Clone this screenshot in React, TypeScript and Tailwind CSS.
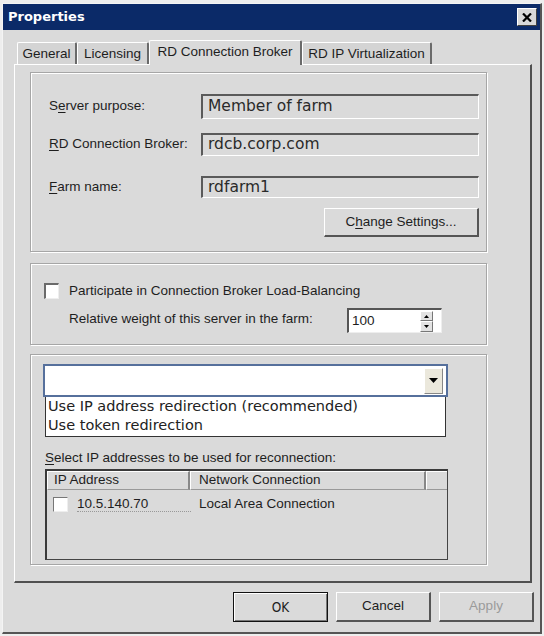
export default function App() {
  const tabs = [
    { label: 'General', w: 'w-[60px]', active: false },
    { label: 'Licensing', w: 'w-[72px]', active: false },
    { label: 'RD Connection Broker', w: 'w-[153px]', active: true },
    { label: 'RD IP Virtualization', w: 'w-[130px]', active: false },
  ];

  const fields = [
    { pre: 'S', key: 'e', post: 'rver purpose:', value: 'Member of farm', h: 'h-[25px]', mt: 'mt-0' },
    { pre: '', key: 'R', post: 'D Connection Broker:', value: 'rdcb.corp.com', h: 'h-[23px]', mt: 'mt-[14px]' },
    { pre: '', key: 'F', post: 'arm name:', value: 'rdfarm1', h: 'h-[22px]', mt: 'mt-[20px]' },
  ];

  return (
    <div className="w-[544px] h-[636px] bg-[#eeeeee] pl-[2px] pt-[3px] font-['Liberation_Sans',sans-serif] text-[13.5px] text-[#1e1e1e]">
      <div className="w-[540px] h-[631px] bg-[#dadada] border-l border-t border-[#f4f4f4] border-r-2 border-b-2 border-r-[#555] border-b-[#555] flex flex-col">
        {/* title bar */}
        <div className="h-[26px] bg-[#0b2a68] flex items-center justify-between pl-[5px] pr-[3px]">
          <span className="text-white font-bold text-[13px] font-['DejaVu_Sans',sans-serif]">Properties</span>
          <div className="w-[20px] h-[18px] bg-[#d8d8d8] border-t border-l border-white border-r border-b border-r-[#404040] border-b-[#404040] flex items-center justify-center">
            <svg width="10" height="9" viewBox="0 0 10 9">
              <path d="M1 0.5 L9 8.5 M9 0.5 L1 8.5" stroke="#000" strokeWidth="2.2" />
            </svg>
          </div>
        </div>

        {/* tabs */}
        <div className="mt-[10px] ml-[14px] h-[24px] flex items-end">
          {tabs.map((t) => (
            <div
              key={t.label}
              className={`${t.w} ${
                t.active
                  ? 'h-[25px] relative top-[1px] z-10 bg-[#dadada] pb-[2px]'
                  : 'h-[22px] bg-[#d4d4d4] pt-[1px]'
              } border-l border-t border-white border-r-2 border-r-[#6a6a6a] rounded-t-[2px] flex items-center justify-center whitespace-nowrap`}
            >
              {t.label}
            </div>
          ))}
        </div>

        {/* panel */}
        <div className="ml-[11px] w-[518px] h-[519px] border-l border-t border-white border-r-2 border-b-2 border-r-[#505050] border-b-[#505050] pl-[15px] pt-[7px]">
          {/* group 1 */}
          <div className="w-[457px] h-[180px] border border-[#a6a6a6] shadow-[inset_1px_1px_0_#fff,1px_1px_0_#fff] pt-[21px] pl-[18px] pr-[7px]">
            {fields.map((f) => (
              <div key={f.value} className={`flex items-center ${f.mt}`}>
                <span className="w-[152px]">
                  {f.pre}
                  <span className="underline underline-offset-2">{f.key}</span>
                  {f.post}
                </span>
                <div
                  className={`w-[278px] ${f.h} border-t-2 border-l-2 border-[#5a5a5a] border-r border-b border-r-white border-b-white flex items-center pl-[5px] font-['DejaVu_Sans',sans-serif] text-[15.5px] text-[#2a2a2a]`}
                >
                  {f.value}
                </div>
              </div>
            ))}
            <div className="flex justify-end mt-[10px]">
              <button className="w-[155px] h-[29px] bg-[#dadada] border-l border-t border-white border-r-2 border-b-2 border-r-[#555] border-b-[#555] flex items-center justify-center">
                C<span className="underline underline-offset-2">h</span>ange Settings...
              </button>
            </div>
          </div>

          {/* group 2 */}
          <div className="mt-[11px] w-[457px] h-[82px] border border-[#a6a6a6] shadow-[inset_1px_1px_0_#fff,1px_1px_0_#fff] pt-[17px] pl-[13px]">
            <div className="flex items-center">
              <div className="w-[15px] h-[16px] bg-white border-t-2 border-l-2 border-[#6a6a6a] border-r border-b border-r-[#eee] border-b-[#eee]" />
              <span className="ml-[10px]">Participate in Connection Broker Load-Balancing</span>
            </div>
            <div className="flex items-start mt-[7px] pl-[25px]">
              <span className="w-[278px] mt-[1px]">Relative weight of this server in the farm:</span>
              <div className="w-[95px] h-[25px] bg-white border-t-2 border-l-2 border-[#555] border-r border-b border-r-[#eee] border-b-[#eee] flex items-center justify-between pl-[3px] pr-[8px]">
                <span>100</span>
                <div className="flex flex-col h-[21px] w-[13px]">
                  <div className="flex-1 bg-[#e2e2e2] border-t border-l border-white border-r border-b border-r-[#777] border-b-[#777] flex items-center justify-center">
                    <svg width="5" height="3" viewBox="0 0 5 3"><path d="M2.5 0 L5 3 L0 3 Z" fill="#000" /></svg>
                  </div>
                  <div className="flex-1 bg-[#e2e2e2] border-t border-l border-white border-r border-b border-r-[#777] border-b-[#777] flex items-center justify-center">
                    <svg width="5" height="3" viewBox="0 0 5 3"><path d="M0 0 L5 0 L2.5 3 Z" fill="#000" /></svg>
                  </div>
                </div>
              </div>
            </div>
          </div>

          {/* group 3 */}
          <div className="mt-[9px] w-[457px] h-[211px] border border-[#a6a6a6] shadow-[inset_1px_1px_0_#fff,1px_1px_0_#fff] pt-[9px] pl-[12px]">
            <div className="w-[405px] h-[33px] bg-white border-2 border-[#56709c] flex items-center justify-end pr-[3px]">
              <div className="w-[19px] h-[26px] bg-[#ebe8dc] border-l border-t border-white border-r border-b border-r-[#888] border-b-[#888] flex items-center justify-center">
                <svg width="9" height="5" viewBox="0 0 9 5"><path d="M0 0 L9 0 L4.5 5 Z" fill="#000" /></svg>
              </div>
            </div>
            <div className="ml-[2px] w-[401px] h-[40px] bg-white border border-[#333] border-t-0 pl-[2px] font-['DejaVu_Sans',sans-serif] text-[14.5px] text-[#222] leading-[19px]">
              <div>Use IP address redirection (recommended)</div>
              <div>Use token redirection</div>
            </div>
            <div className="ml-[2px] mt-[13px] leading-[16px]">
              <span className="underline underline-offset-2">S</span>elect IP addresses to be used for reconnection:
            </div>
            <div className="ml-[2px] mt-[3px] w-[403px] h-[91px] border-t-2 border-l-2 border-[#3a3a3a] border-r border-b border-r-[#444] border-b-[#444] bg-[#dadada]">
              <div className="flex h-[19px]">
                <div className="w-[143px] pl-[6px] flex items-center border-r-2 border-r-[#888] border-b border-b-[#999] border-t border-l border-white">IP Address</div>
                <div className="w-[236px] pl-[8px] flex items-center border-r-2 border-r-[#888] border-b border-b-[#999] border-t border-l border-white">Network Connection</div>
                <div className="flex-1 border-b border-b-[#999] border-t border-l border-white" />
              </div>
              <div className="flex items-center mt-[6px] h-[16px]">
                <div className="ml-[6px] w-[15px] h-[15px] bg-white border-t border-l border-[#777] border-r border-b border-r-[#eee] border-b-[#eee]" />
                <span className="ml-[9px] w-[114px] border-b border-dotted border-[#999] leading-[15px]">10.5.140.70</span>
                <span className="pl-[8px]">Local Area Connection</span>
              </div>
            </div>
          </div>
        </div>

        {/* buttons */}
        <div className="mt-[9px] flex justify-end gap-[8px] pr-[6px]">
          <button className="w-[95px] h-[30px] bg-[#dadada] border border-[#111] shadow-[inset_1px_1px_0_#fff,inset_-1px_-1px_0_#777] flex items-center justify-center font-['DejaVu_Sans_Condensed','DejaVu_Sans',sans-serif] text-[13.5px]">
            OK
          </button>
          <button className="w-[95px] h-[30px] bg-[#dadada] border-l border-t border-white border-r-2 border-b-2 border-r-[#555] border-b-[#555] flex items-center justify-center">
            Cancel
          </button>
          <button className="w-[95px] h-[30px] bg-[#dadada] border-l border-t border-white border-r-2 border-b-2 border-r-[#555] border-b-[#555] flex items-center justify-center text-[#9a9a9a]">
            Apply
          </button>
        </div>
      </div>
    </div>
  );
}
